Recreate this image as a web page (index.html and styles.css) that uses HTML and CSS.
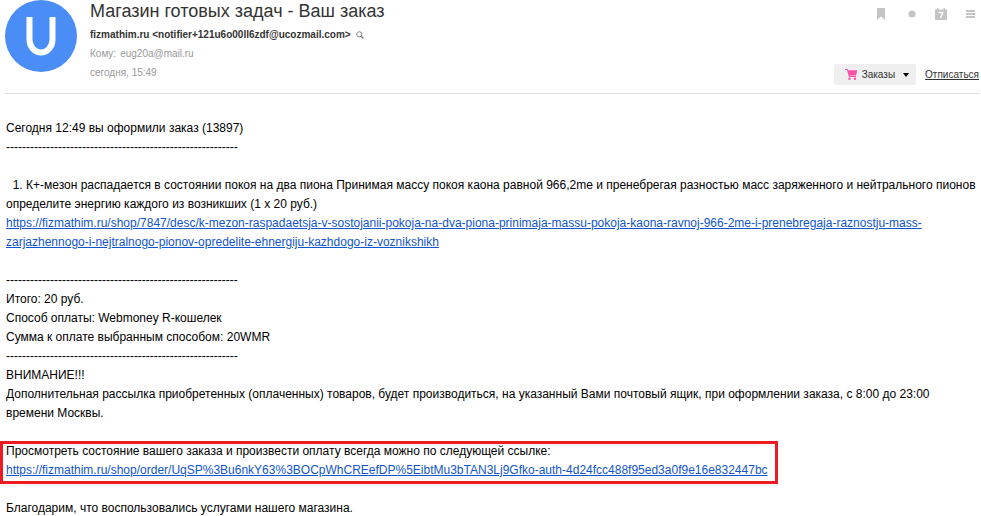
FILE: index.html
```html
<!DOCTYPE html>
<html lang="ru">
<head>
  <meta charset="UTF-8">
  <title>Магазин готовых задач - Ваш заказ</title>
  <link rel="stylesheet" href="styles.css">
</head>
<body>
  <header class="mail-head">
    <svg class="avatar" viewBox="0 0 72 72" aria-hidden="true">
      <circle cx="36" cy="36" r="36" fill="#4b8df6"/>
      <path d="M24.500 17v22.500a11.500 13 0 0 0 23 0V17" fill="none" stroke="#fff" stroke-width="6"/>
    </svg>

    <div class="info">
      <h1>Магазин готовых задач - Ваш заказ</h1>
      <div class="sender">
        <span>fizmathim.ru &lt;notifier+121u6o00ll6zdf@ucozmail.com&gt;</span>
        <svg width="8" height="8" viewBox="0 0 8 8" aria-hidden="true">
          <circle cx="3.300" cy="3.300" r="2.600" fill="none" stroke="#888"/>
          <path d="M5.200 5.200L7.500 7.500" stroke="#777" stroke-width="1.300"/>
        </svg>
      </div>
      <div class="meta"><span>Кому:</span> <span>eug20a@mail.ru</span></div>
      <div class="meta">сегодня, 15:49</div>
    </div>

    <div class="side">
      <div class="tools">
        <button aria-label="Закладка"><svg width="12" height="12" viewBox="0 0 12 12"><path d="M0 0h8v12L4 8.500 0 12z"/></svg></button>
        <button aria-label="Отметить"><svg width="8" height="12" viewBox="0 0 8 12"><circle cx="4" cy="6" r="3.500"/></svg></button>
        <button aria-label="Напомнить">
          <svg width="12" height="12" viewBox="0 0 12 12">
            <path d="M0 1.500h2V0h1.500v1.500h5V0H10v1.500h2V11a1 1 0 0 1-1 1H1a1 1 0 0 1-1-1z"/>
            <path d="M3.500 4.500h4.500L5.500 10" fill="none" stroke="#fff" stroke-width="1.300"/>
          </svg>
        </button>
        <button aria-label="Меню"><svg width="9" height="12" viewBox="0 0 9 12"><path d="M0 2h9v2H0zM0 5h9v2H0zM0 8h9v2H0z"/></svg></button>
      </div>
      <div class="actions">
        <button class="label-btn">
          <svg width="12" height="11" viewBox="0 0 12 11" aria-hidden="true">
            <path d="M0 0h2.500l.7 1.500H12L11 6H4.800l.3 1H11v1H4L2 1H0z" fill="#ff4fa8"/>
            <path d="M3 1.500h9L11 6.500H4.500z" fill="#ff4fa8"/>
            <circle cx="4.500" cy="9.700" r="1.200" fill="#ff4fa8"/>
            <circle cx="10" cy="9.700" r="1.200" fill="#ff4fa8"/>
          </svg>
          <span>Заказы</span>
          <svg class="arrow" width="6" height="4" viewBox="0 0 6 4" aria-hidden="true"><path d="M0 0h6L3 4z"/></svg>
        </button>
        <a class="unsubscribe" href="#">Отписаться</a>
      </div>
    </div>
  </header>

  <main class="mail-body">
    <p>Сегодня 12:49 вы оформили заказ (13897)<br>
    ----------------------------------------------------------</p>

    <p>&nbsp;&nbsp;1. К+-мезон распадается в состоянии покоя на два пиона Принимая массу покоя каона равной 966,2me и пренебрегая разностью масс заряженного и нейтрального пионов определите энергию каждого из возникших (1 x 20 руб.)<br>
    <a href="#">https://fizmathim.ru/shop/7847/desc/k-mezon-raspadaetsja-v-sostojanii-pokoja-na-dva-piona-prinimaja-massu-pokoja-kaona-ravnoj-966-2me-i-prenebregaja-raznostju-mass-zarjazhennogo-i-nejtralnogo-pionov-opredelite-ehnergiju-kazhdogo-iz-voznikshikh</a></p>

    <p>----------------------------------------------------------<br>
    Итого: 20 руб.<br>
    Способ оплаты: Webmoney R-кошелек<br>
    Сумма к оплате выбранным способом: 20WMR<br>
    ----------------------------------------------------------<br>
    ВНИМАНИЕ!!!<br>
    Дополнительная рассылка приобретенных (оплаченных) товаров, будет производиться, на указанный Вами почтовый ящик, при оформлении заказа, с 8:00 до 23:00 времени Москвы.</p>

    <p class="marked">Просмотреть состояние вашего заказа и произвести оплату всегда можно по следующей ссылке:<br>
    <a href="#">https://fizmathim.ru/shop/order/UqSP%3Bu6nkY63%3BOCpWhCREefDP%5EibtMu3bTAN3Lj9Gfko-auth-4d24fcc488f95ed3a0f9e16e832447bc</a></p>

    <p>Благодарим, что воспользовались услугами нашего магазина.</p>
  </main>
</body>
</html>
```
FILE: styles.css
```css
body {
  margin: 0;
  background: #fff;
  color: #000;
  font-family: "Liberation Sans", Arial, sans-serif;
  font-size: 12px;
}
button {
  padding: 0;
  border: none;
  background: none;
  font-family: inherit;
  cursor: pointer;
}
.mail-head {
  display: flex;
  margin: 0 2px 0 5px;
  padding-bottom: 8px;
  border-bottom: 1px solid #ddd;
}
.avatar {
  width: 72px;
  height: 72px;
  flex: none;
}
.info {
  flex: 1;
  margin-left: 13px;
  padding-bottom: 3px;
}
h1 {
  margin: 0 0 4px;
  font-size: 18px;
  line-height: 22px;
  font-weight: normal;
  color: #333;
}
.sender {
  display: flex;
  align-items: center;
  gap: 5px;
  font-size: 10px;
  line-height: 18px;
  font-weight: bold;
  color: #333;
}
.meta {
  display: flex;
  gap: 4px;
  font-size: 10px;
  line-height: 19px;
  color: #999;
}
.side {
  display: flex;
  flex-direction: column;
  justify-content: space-between;
  align-items: flex-end;
}
.tools {
  display: flex;
  gap: 19px;
  margin-top: 8px;
  padding-right: 4px;
}
.tools svg {
  display: block;
  fill: #c4c4c4;
}
.actions {
  display: flex;
  align-items: center;
  gap: 9px;
}
.label-btn {
  display: flex;
  align-items: center;
  gap: 5px;
  height: 21px;
  padding: 0 7px 0 11px;
  background: #efefef;
  border-radius: 2px;
  font-size: 10px;
  color: #333;
}
.label-btn .arrow {
  margin-left: 3px;
}
.unsubscribe {
  font-size: 10px;
  color: #333;
}
.mail-body {
  padding: 25px 2px 0 6px;
  line-height: 19px;
}
.mail-body p {
  margin: 0 0 19px;
}
.mail-body a {
  color: #15c;
}
.mail-body .marked {
  position: relative;
  width: fit-content;
}
/* red frame around the payment link */
.marked::after {
  content: "";
  position: absolute;
  top: -1px;
  right: -10px;
  bottom: -4px;
  left: -6px;
  border: 3px solid #ed1c24;
  pointer-events: none;
}
```
